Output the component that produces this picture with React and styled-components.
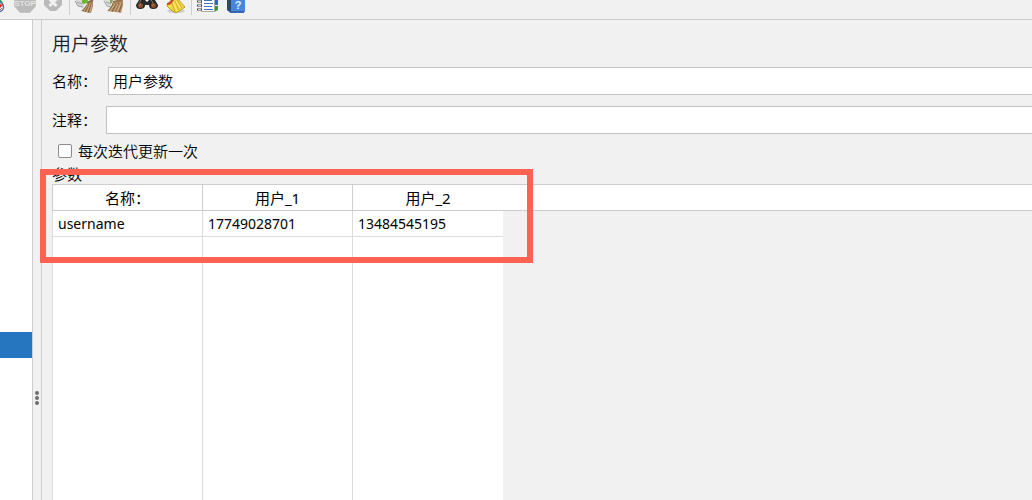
import React from "react";
import styled, { createGlobalStyle } from "styled-components";

const GlobalStyle = createGlobalStyle`
  *, *::before, *::after { box-sizing: border-box; }
  body {
    margin: 0;
    background: #f1f1f1;
    color: #000;
    font: 350 15px/20px "Noto Sans", "Noto Sans CJK SC", sans-serif;
  }
`;

const Window = styled.div`
  display: flex;
  flex-direction: column;
  height: 100vh;
  overflow: hidden;
`;

const Toolbar = styled.header`
  display: flex;
  flex: none;
  gap: 4px;
  height: 20px;
  border-bottom: 1px solid #cdcdcd;
`;

const ToolButton = styled.button`
  width: ${(p) => p.$width || 24}px;
  height: 16px;
  padding: 0;
  border: 0;
  background: none;

  svg { display: block; }
`;

const Separator = styled.span`
  width: 1px;
  height: 15px;
  background: #cdcdcd;
`;

const Workspace = styled.div`
  display: flex;
  flex: 1;
  min-height: 0;
`;

const TreePane = styled.nav`
  flex: none;
  width: 32px;
  padding-top: 312px;
  background: #fff;
`;

const SelectedNode = styled.div`
  height: 26px;
  background: #2675bf;
`;

const Splitter = styled.div`
  display: flex;
  flex: none;
  flex-direction: column;
  align-items: center;
  gap: 1px;
  width: 10px;
  padding-top: 371px;
  border: solid #cdcdcd;
  border-width: 0 1px;
`;

const Grip = styled.span`
  width: 4px;
  height: 4px;
  border-radius: 2px;
  background: #6e6e6e;
`;

const Panel = styled.main`
  display: flex;
  flex: 1;
  flex-direction: column;
  min-width: 0;
  padding: 10px 0 0 10px;
`;

const Title = styled.h1`
  margin: 0;
  font-size: 19px;
  font-weight: 350;
  line-height: 28px;
  color: #1c2028;
`;

const Field = styled.div`
  display: flex;
  align-items: center;
  gap: ${(p) => p.$gap}px;
  margin-top: ${(p) => p.$top}px;
`;

const TextInput = styled.input`
  flex: 1;
  min-width: 0;
  height: 28px;
  padding: 0 4px 2px;
  border: 1px solid #c2c2c2;
  border-right: 0;
  border-radius: 0;
  outline: 0;
  background: #fff;
  color: #000;
  font: inherit;
`;

const CheckField = styled.label`
  display: flex;
  align-items: center;
  gap: 6px;
  height: 20px;
  margin-top: 7px;
  padding-left: 6px;
`;

const Checkbox = styled.input`
  appearance: none;
  width: 14px;
  height: 14px;
  margin: 0;
  border: 1px solid #8c8c8c;
  border-radius: 2px;
  background: #fff;
`;

const Parameters = styled.section`
  position: relative;
  display: flex;
  flex: 1;
  min-height: 0;
  margin-top: 3px;
`;

const Grid = styled.table`
  width: 100%;
  height: 100%;
  table-layout: fixed;
  border-spacing: 0;

  caption {
    height: 20px;
    text-align: left;
  }
`;

const Column = styled.col`
  width: ${(p) => p.$width}px;
`;

const HeadCell = styled.th`
  height: 27px;
  padding: 0;
  border: solid #cdcdcd;
  border-width: 1px 0 1px ${(p) => (p.$open ? 0 : 1)}px;
  background: #fff;
  font-weight: 400;
`;

const Cell = styled.td`
  height: 26px;
  padding: 0 5px;
  border: solid #dcdcdc;
  border-width: 0 0 1px 1px;
  background: #fff;
  font-size: 14px;
  font-weight: 400;
`;

const RestCell = styled(Cell)`
  height: auto;
  border-bottom: 0;
`;

const Outside = styled.td`
  padding: 0;
`;

const Highlight = styled.div`
  position: absolute;
  top: 5px;
  left: -12px;
  width: 493px;
  height: 94px;
  border: 6px solid #ff6253;
  pointer-events: none;
`;

const IconText = styled.text`
  font-family: "Liberation Sans", sans-serif;
  font-size: ${(p) => p.$size}px;
  font-weight: 700;
  text-anchor: middle;
`;

function Icon({ width = 24, children }) {
  return (
    <svg width={width} height="16" viewBox={`0 0 ${width} 16`} aria-hidden="true">
      {children}
    </svg>
  );
}

const StartIcon = () => (
  <Icon width={9}>
    <path d="M0 0h1l2 3-3 1z" fill="#32a055" />
    <circle cx="-1" cy="7" r="4.500" fill="#edf5fb" stroke="#4d7cae" strokeWidth="1.500" />
    <path d="M0 4v3l3-3" fill="none" stroke="#d52f28" strokeWidth="1.500" />
    <path d="M0 10 2 8" stroke="#d8584f" />
  </Icon>
);

const StopIcon = () => (
  <Icon>
    <path d="M1 0h22v6l-6 7H7L1 6z" fill="#bababa" />
    <path d="M1.500 0v6l6 6.500h9l6-6.500V0" fill="none" stroke="#c6c6c6" />
    <IconText $size={8} x="12" y="6" fill="#e2e2e2">STOP</IconText>
  </Icon>
);

const ShutdownIcon = () => (
  <Icon>
    <path d="M3 0h18v5l-6 6H9L3 5z" fill="#bababa" />
    <path d="M8.500-1l7 7M15.500-1l-7 7" stroke="#f1f1f1" strokeWidth="3" />
  </Icon>
);

const ClearIcon = () => (
  <Icon>
    <path d="M1 0h8l2 4-2 4-5-2z" fill="#d6d8d7" />
    <path d="M1 1l3 5 5 1M3 2l5 2" fill="none" stroke="#999d9b" />
    <path d="M13 4 19 1v5l-2 7-5-1-5-1 4-4z" fill="#a9845b" />
    <path d="m13 5-4 6M15 4l-4 8M17 4l-3 9" stroke="#735638" strokeWidth=".8" />
    <path d="m14 5-4 6M16 4l-3 8M18 4l-2 8" stroke="#d6b58a" strokeWidth=".8" />
    <path d="m13 3 6-3" stroke="#8b6949" strokeWidth="2" />
    <path d="M8 0h6l-1 3-3 1-2-1z" fill="#63bd20" />
  </Icon>
);

const ClearAllIcon = () => (
  <Icon>
    <path d="M1 0h9l1 4-3 4-4-2z" fill="#d9dbda" />
    <path d="M2 1l3 5 4 1M4 2l5 2" fill="none" stroke="#a3a7a5" />
    <path d="M10 3 21 0v5l-2 8-5-1-9-1 5-5z" fill="#b18b61" />
    <path d="m11 4-4 7M14 4l-4 8M17 3l-4 9M20 3l-3 9" stroke="#765a3c" strokeWidth=".8" />
    <path d="m13 4-5 7M16 4l-4 8M19 3l-4 9" stroke="#dcbc92" strokeWidth=".8" />
    <path d="m11 2 9-2" stroke="#927051" strokeWidth="2" />
    <path d="M8 0h3l-1 3H8z" fill="#7aab4f" />
  </Icon>
);

const SearchIcon = () => (
  <Icon>
    <path d="M4 0h6l2 2 2-2h6l3 5c0 3-2 4-5 4-2 0-4-1-4-4h-4c0 3-2 4-5 4-3 0-4-2-4-4z" fill="#292929" />
    <path d="m6 0-2 3M16 0l2 3" stroke="#777" />
    <circle cx="5.500" cy="5.500" r="2.500" fill="#8b4d29" />
    <circle cx="18.500" cy="5.500" r="2.500" fill="#8b4d29" />
    <path d="m4 6 2-2M17 6l2-2" stroke="#cd8351" />
  </Icon>
);

const ResetIcon = () => (
  <Icon>
    <ellipse cx="13" cy="11" rx="9" ry="2" fill="#d0d0ce" />
    <path d="M7 1 14-2l8 9-4 3-5 3-5-3-4-4z" fill="#f3d83f" stroke="#a98c1d" strokeWidth=".8" />
    <path d="M9 3l3 9M12 1l4 9M14 0l5 8" fill="none" stroke="#c49f20" strokeWidth=".8" />
    <path d="M10 2l4 9M13 1l4 7" stroke="#fff18a" />
    <path d="M4 4c3 0 5-2 6-5" fill="none" stroke="#cc3a2b" strokeWidth="2" />
  </Icon>
);

const FunctionIcon = () => (
  <Icon>
    <path d="M18 0h4v5h-4z" fill="#2868c6" />
    <path d="M18 6h4v4l-4 2z" fill="#3d9a29" />
    <path d="M5.500-1h13v12.500h-13z" fill="#fff" stroke="#a6a6a6" />
    <path d="M8 .5h8M8 3.500h9M8 6.500h8M8 9.500h9" stroke="#3974bd" />
    <path d="M1 1.500h5M1 5.500h5M1 9.500h5" stroke="#444" strokeWidth="2" />
    <path d="M2 1.500h3M2 5.500h3M2 9.500h3" stroke="#ddd" />
  </Icon>
);

const HelpIcon = () => (
  <Icon>
    <path d="M4 0h17v12H5l-2-2z" fill="#4886dc" />
    <path d="M3 0h4v11H5l-2-1z" fill="#2c4a70" />
    <path d="M5 11h15v2H6z" fill="#3767ad" />
    <IconText $size={11} x="14" y="9" fill="#e3eefc">?</IconText>
  </Icon>
);

const toolGroups = [
  [
    { label: "启动", icon: StartIcon, width: 9 },
    { label: "停止", icon: StopIcon, disabled: true },
    { label: "关闭", icon: ShutdownIcon, disabled: true },
  ],
  [
    { label: "清除", icon: ClearIcon },
    { label: "清除全部", icon: ClearAllIcon },
  ],
  [
    { label: "搜索", icon: SearchIcon },
    { label: "重置搜索", icon: ResetIcon },
  ],
  [
    { label: "函数助手", icon: FunctionIcon },
    { label: "帮助", icon: HelpIcon },
  ],
];

const headers = ["名称：", "用户_1", "用户_2"];
const rows = [
  ["username", "17749028701", "13484545195"],
  ["", "", ""],
];

export default function App() {
  return (
    <Window>
      <GlobalStyle />
      <Toolbar>
        {toolGroups.map((group, i) => (
          <React.Fragment key={i}>
            {i > 0 && <Separator />}
            {group.map(({ label, icon: Glyph, width, disabled }) => (
              <ToolButton key={label} type="button" aria-label={label} $width={width} disabled={disabled}>
                <Glyph />
              </ToolButton>
            ))}
          </React.Fragment>
        ))}
      </Toolbar>
      <Workspace>
        <TreePane>
          <SelectedNode />
        </TreePane>
        <Splitter>
          <Grip />
          <Grip />
          <Grip />
        </Splitter>
        <Panel>
          <Title>用户参数</Title>
          <Field $gap={11} $top={9}>
            <label htmlFor="name">名称：</label>
            <TextInput id="name" defaultValue="用户参数" />
          </Field>
          <Field $gap={9} $top={11}>
            <label htmlFor="comment">注释：</label>
            <TextInput id="comment" />
          </Field>
          <CheckField>
            <Checkbox type="checkbox" />
            每次迭代更新一次
          </CheckField>
          <Parameters>
            <Grid>
              <caption>参数</caption>
              <colgroup>
                <Column $width={150} />
                <Column $width={150} />
                <Column $width={151} />
                <col />
              </colgroup>
              <thead>
                <tr>
                  {headers.map((text) => (
                    <HeadCell key={text} scope="col">{text}</HeadCell>
                  ))}
                  <HeadCell as="td" $open />
                </tr>
              </thead>
              <tbody>
                {rows.map((row, r) => (
                  <tr key={r}>
                    {row.map((value, c) => (
                      <Cell key={c}>{value}</Cell>
                    ))}
                    <Outside />
                  </tr>
                ))}
                <tr>
                  <RestCell />
                  <RestCell />
                  <RestCell />
                  <Outside />
                </tr>
              </tbody>
            </Grid>
            <Highlight />
          </Parameters>
        </Panel>
      </Workspace>
    </Window>
  );
}
